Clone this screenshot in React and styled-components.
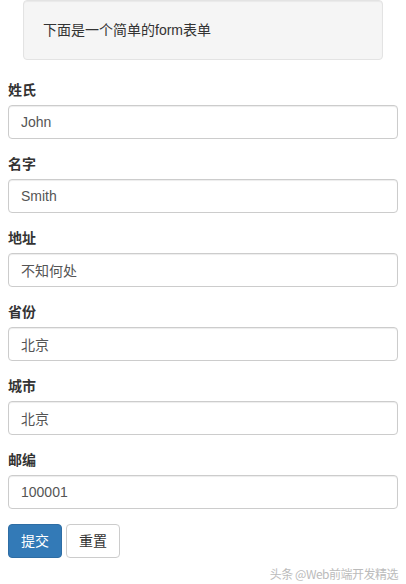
import React from "react";
import styled, { createGlobalStyle } from "styled-components";

const Global = createGlobalStyle`
  html, body { margin: 0; padding: 0; background: #fff; }
  body {
    font-family: "Liberation Sans", "Noto Sans CJK SC", sans-serif;
    font-size: 14px;
    line-height: 20px;
    color: #333;
  }
  * { box-sizing: border-box; }
`;

const Page = styled.div`
  padding: 0 8px;
`;

const Well = styled.div`
  margin: 0 15px 20px;
  min-height: 20px;
  padding: 19px;
  background: #f5f5f5;
  border: 1px solid #e3e3e3;
  border-radius: 4px;
  box-shadow: inset 0 1px 1px rgba(0, 0, 0, 0.05);
  color: #333;
`;

const Form = styled.form`
  display: flex;
  flex-direction: column;
`;

const Group = styled.div`
  display: flex;
  flex-direction: column;
  margin-bottom: 15px;
`;

const Label = styled.label`
  display: block;
  font-weight: 700;
  margin-bottom: 5px;
  height: 20px;
  color: #333;
`;

const Input = styled.input`
  display: block;
  width: 100%;
  height: 34px;
  padding: 6px 12px;
  font-family: "Liberation Sans", "Noto Sans CJK SC", sans-serif;
  font-size: 14px;
  line-height: 20px;
  color: #555;
  background: #fff;
  border: 1px solid #ccc;
  border-radius: 4px;
  box-shadow: inset 0 1px 1px rgba(0, 0, 0, 0.075);
  outline: none;
`;

const Actions = styled.div`
  display: flex;
  gap: 4px;
`;

const Button = styled.button`
  height: 34px;
  padding: 6px 12px;
  font-family: "Liberation Sans", "Noto Sans CJK SC", sans-serif;
  font-size: 14px;
  line-height: 20px;
  border-radius: 4px;
  border: 1px solid ${(p) => (p.$primary ? "#2e6da4" : "#ccc")};
  background: ${(p) => (p.$primary ? "#337ab7" : "#fff")};
  color: ${(p) => (p.$primary ? "#fff" : "#333")};
  cursor: pointer;
`;

const Watermark = styled.div`
  display: flex;
  justify-content: flex-end;
  margin-top: 6px;
  font-family: "Noto Sans CJK SC", sans-serif;
  font-size: 12px;
  color: #bbb;
  letter-spacing: -0.5px;
`;

const fields = [
  ["姓氏", "John"],
  ["名字", "Smith"],
  ["地址", "不知何处"],
  ["省份", "北京"],
  ["城市", "北京"],
  ["邮编", "100001"],
];

export default function App() {
  return (
    <>
      <Global />
      <Page>
        <Well>下面是一个简单的form表单</Well>
        <Form onSubmit={(e) => e.preventDefault()}>
          {fields.map(([label, value]) => (
            <Group key={label}>
              <Label>{label}</Label>
              <Input defaultValue={value} />
            </Group>
          ))}
          <Actions>
            <Button $primary type="submit">提交</Button>
            <Button type="reset">重置</Button>
          </Actions>
        </Form>
        <Watermark>头条 @Web前端开发精选</Watermark>
      </Page>
    </>
  );
}
